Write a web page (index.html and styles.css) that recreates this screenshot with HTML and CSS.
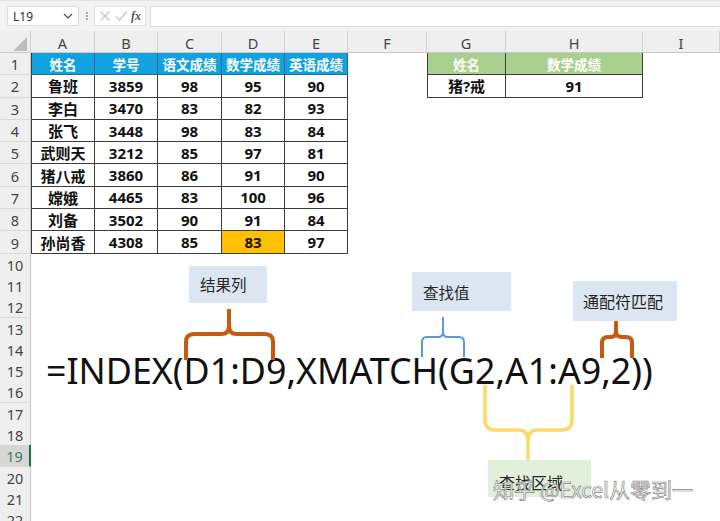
FILE: index.html
```html
<!DOCTYPE html>
<html lang="zh">
<head>
<meta charset="utf-8">
<title>INDEX XMATCH</title>
<link rel="stylesheet" href="styles.css">
</head>
<body>
<div class="page">
  <div class="toolbar">
    <div class="namebox"><span>L19</span>
      <svg class="chev" width="10" height="6" viewBox="0 0 10 6"><path d="M1 1 L5 5 L9 1" fill="none" stroke="#555" stroke-width="1.3"/></svg>
    </div>
    <svg class="dots" width="4" height="12" viewBox="0 0 4 12"><circle cx="2" cy="3" r="1" fill="#999"/><circle cx="2" cy="6" r="1" fill="#999"/><circle cx="2" cy="9" r="1" fill="#999"/></svg>
    <div class="fxbox">
      <svg width="12" height="12" viewBox="0 0 12 12"><path d="M1.5 1.5 L10.5 10.5 M10.5 1.5 L1.5 10.5" stroke="#c4c4c4" stroke-width="1.2"/></svg>
      <svg width="13" height="12" viewBox="0 0 13 12"><path d="M1 6.5 L4.5 10 L12 1.5" fill="none" stroke="#c4c4c4" stroke-width="1.2"/></svg>
      <span class="fx">fx</span>
    </div>
    <div class="formula"></div>
  </div>

  <div class="sheet">
    <div class="row colhead">
      <div class="corner"><svg width="14" height="14" viewBox="0 0 14 14"><path d="M14 0 L14 14 L0 14 Z" fill="#bdbdbd"/></svg></div>
      <div class="ch">A</div><div class="ch">B</div><div class="ch">C</div><div class="ch">D</div><div class="ch">E</div><div class="ch">F</div><div class="ch">G</div><div class="ch">H</div><div class="ch">I</div>
    </div>

    <div class="row big">
      <div class="rh">1</div>
      <div class="c th tl">姓名</div><div class="c th">学号</div><div class="c th">语文成绩</div><div class="c th">数学成绩</div><div class="c th">英语成绩</div>
      <div></div>
      <div class="c gh tl">姓名</div><div class="c gh">数学成绩</div>
    </div>
    <div class="row big">
      <div class="rh">2</div>
      <div class="c first">鲁班</div><div class="c">3859</div><div class="c">98</div><div class="c">95</div><div class="c">90</div>
      <div></div>
      <div class="c first">猪?戒</div><div class="c">91</div>
    </div>
    <div class="row big">
      <div class="rh">3</div>
      <div class="c first">李白</div><div class="c">3470</div><div class="c">83</div><div class="c">82</div><div class="c">93</div>
    </div>
    <div class="row big">
      <div class="rh">4</div>
      <div class="c first">张飞</div><div class="c">3448</div><div class="c">98</div><div class="c">83</div><div class="c">84</div>
    </div>
    <div class="row big">
      <div class="rh">5</div>
      <div class="c first">武则天</div><div class="c">3212</div><div class="c">85</div><div class="c">97</div><div class="c">81</div>
    </div>
    <div class="row big">
      <div class="rh">6</div>
      <div class="c first">猪八戒</div><div class="c">3860</div><div class="c">86</div><div class="c">91</div><div class="c">90</div>
    </div>
    <div class="row big">
      <div class="rh">7</div>
      <div class="c first">嫦娥</div><div class="c">4465</div><div class="c">83</div><div class="c">100</div><div class="c">96</div>
    </div>
    <div class="row big">
      <div class="rh">8</div>
      <div class="c first">刘备</div><div class="c">3502</div><div class="c">90</div><div class="c">91</div><div class="c">84</div>
    </div>
    <div class="row big">
      <div class="rh">9</div>
      <div class="c first">孙尚香</div><div class="c">4308</div><div class="c">85</div><div class="c hl">83</div><div class="c">97</div>
    </div>
    <div class="row"><div class="rh">10</div></div>
    <div class="row"><div class="rh">11</div></div>
    <div class="row"><div class="rh">12</div></div>
    <div class="row"><div class="rh">13</div></div>
    <div class="row"><div class="rh">14</div></div>
    <div class="row"><div class="rh">15</div></div>
    <div class="row"><div class="rh">16</div></div>
    <div class="row"><div class="rh">17</div></div>
    <div class="row"><div class="rh">18</div></div>
    <div class="row"><div class="rh sel">19</div></div>
    <div class="row"><div class="rh">20</div></div>
    <div class="row"><div class="rh">21</div></div>
    <div class="row"><div class="rh">22</div></div>
  </div>

  <div class="formula-text">=INDEX(D1:D9,XMATCH(G2,A1:A9,2))</div>

  <svg class="braces" width="720" height="521" viewBox="0 0 720 521">
    <path d="M186,360 V342 Q186,334 194,334 H221 Q229,334 229,326 V309 M229,326 Q229,334 237,334 H265 Q273,334 273,342 V360" fill="none" stroke="#c55a11" stroke-width="4"/>
    <path d="M422,357 V342 Q422,337 427,337 H438 Q443,337 443,332 V317 M443,332 Q443,337 448,337 H459 Q464,337 464,342 V357" fill="none" stroke="#5b9bd5" stroke-width="2"/>
    <path d="M602,358 V343 Q602,337 608,337 H611 Q616,337 616,331 V321 M616,331 Q616,337 622,337 H626 Q632,337 632,343 V358" fill="none" stroke="#c55a11" stroke-width="4"/>
    <path d="M485,385 V420 Q485,430 495,430 H518 Q528,430 528,440 V460 M528,440 Q528,430 538,430 H562 Q572,430 572,420 V385" fill="none" stroke="#ffd966" stroke-width="3.5"/>
  </svg>

  <div class="note n1">结果列</div>
  <div class="note n2">查找值</div>
  <div class="note n3">通配符匹配</div>
  <div class="note n4">查找区域</div>

  <div class="watermark">知乎 @Excel从零到一</div>
</div>
</body>
</html>
```

FILE: styles.css
```css
* { box-sizing: border-box; }
html, body { margin: 0; padding: 0; background: #fff; }
body {
  width: 720px;
  height: 521px;
  overflow: hidden;
  font-family: "Noto Sans", "Noto Sans CJK SC", sans-serif;
  color: #222;
}
.page { position: relative; width: 720px; height: 521px; overflow: hidden; }

/* toolbar */
.toolbar {
  height: 31px;
  background: #f3f3f3;
  display: flex;
  align-items: center;
  padding: 0 0 0 7px;
  border-top: 1px solid #e2e2e2;
}
.namebox {
  width: 72px;
  height: 20px;
  background: #fff;
  border: 1px solid #dcdcdc;
  border-radius: 2px;
  display: flex;
  align-items: center;
  justify-content: space-between;
  padding: 0 5px 0 5px;
  font-size: 12px;
  color: #333;
}
.dots { margin: 0 5px 0 6px; }
.fxbox {
  width: 52px;
  height: 20px;
  background: #fff;
  border: 1px solid #e0e0e0;
  display: flex;
  align-items: center;
  justify-content: space-between;
  padding: 0 4px 0 4px;
}
.fx {
  font-family: "Liberation Serif", serif;
  font-style: italic;
  font-weight: 700;
  font-size: 12px;
  color: #555;
}
.formula {
  flex: 1;
  height: 21px;
  margin-left: 4px;
  background: #fff;
  border: 1px solid #dcdcdc;
  border-right: none;
}

/* sheet */
.row {
  display: grid;
  grid-template-columns: 31px 64px 63px 64px 63px 63px 79px 79px 137px 1fr;
  height: 21.3px;
}
.row.big { height: 22.3px; }
.colhead {
  height: 22px;
  background: #efefef;
  border-bottom: 1px solid #c9c9c9;
}
.corner {
  display: flex;
  align-items: flex-end;
  justify-content: flex-end;
  padding: 0 3px 2px 0;
  border-right: 1px solid #d4d4d4;
}
.ch {
  display: flex;
  align-items: center;
  justify-content: center;
  font-size: 14.5px;
  color: #444;
  border-right: 1px solid #d4d4d4;
  padding-top: 2px;
}
.rh {
  background: #efefef;
  border-right: 1px solid #c9c9c9;
  border-bottom: 1px solid #dadada;
  display: flex;
  align-items: center;
  justify-content: center;
  font-size: 14.5px;
  color: #444;
  padding-top: 1px;
}
.rh.sel {
  background: #d6d6d6;
  color: #3e7d5a;
  border-right: 2px solid #217346;
}
.c {
  display: flex;
  align-items: center;
  justify-content: center;
  font-weight: 700;
  font-size: 15px;
  color: #111;
  border-right: 1px solid #3c3c3c;
  border-bottom: 1px solid #3c3c3c;
}
.c.first { border-left: 1px solid #3c3c3c; }
.c.th {
  background: #12a2e0;
  color: #fff;
  font-size: 13.5px;
  border-color: #2a6a88;
}
.c.gh {
  background: #a9d08e;
  color: #fff;
  font-size: 13.5px;
  border-right-color: #3c3c3c;
  border-bottom-color: #3c3c3c;
}
.c.tl { border-left: 1px solid #3c3c3c; }
.c.hl { background: #ffc000; }

/* big formula */
.formula-text {
  position: absolute;
  left: 46px;
  top: 353px;
  font-family: "Noto Sans", sans-serif;
  font-size: 35.8px;
  line-height: 35px;
  color: #111;
  white-space: nowrap;
}

.braces { position: absolute; left: 0; top: 0; pointer-events: none; }

.note {
  position: absolute;
  background: #dce6f2;
  font-size: 15.5px;
  color: #262626;
  display: flex;
  align-items: center;
  padding-left: 11px;
  font-family: "Noto Sans CJK SC", sans-serif;
}
.n1 { left: 189px; top: 266px; width: 78px; height: 37px; padding-bottom: 2px; }
.n2 { left: 412px; top: 272px; width: 99px; height: 39px; }
.n3 { left: 573px; top: 281px; width: 104px; height: 40px; padding-left: 10px; font-size: 16px; }
.n4 { left: 488px; top: 460px; width: 103px; height: 37px; background: #e2efda; padding-top: 6px; font-size: 16px; }

.watermark {
  position: absolute;
  left: 493px;
  top: 475px;
  font-family: "Noto Sans CJK SC", sans-serif;
  font-size: 21px;
  line-height: 28px;
  color: rgba(255,255,255,0.9);
  -webkit-text-stroke: 0.7px #8a8a8a;
  white-space: nowrap;
}
```
